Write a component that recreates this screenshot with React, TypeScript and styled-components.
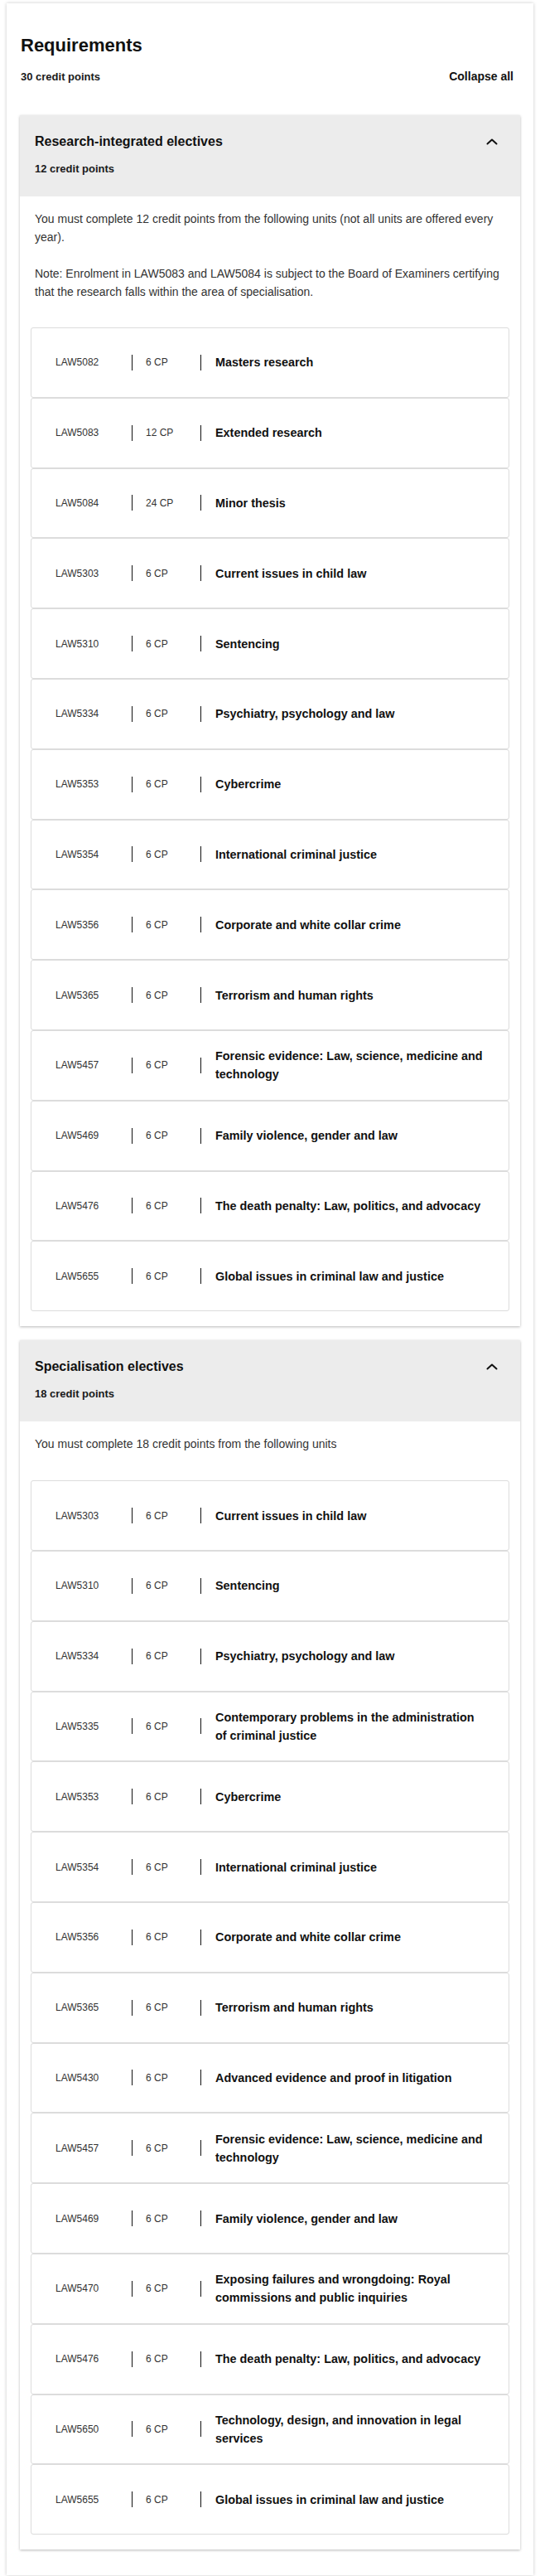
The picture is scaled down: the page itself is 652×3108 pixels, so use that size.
import styled, { createGlobalStyle } from "styled-components";

const GlobalStyle = createGlobalStyle`
  html, body {
    margin: 0;
    padding: 0;
    background: #fff;
  }
  body {
    font-family: "Liberation Sans", Arial, sans-serif;
    color: #111;
  }
  * {
    box-sizing: border-box;
  }
`;

type Unit = { code: string; cp: number; title: string };

const researchUnits: Unit[] = [
  { code: "LAW5082", cp: 6, title: "Masters research" },
  { code: "LAW5083", cp: 12, title: "Extended research" },
  { code: "LAW5084", cp: 24, title: "Minor thesis" },
  { code: "LAW5303", cp: 6, title: "Current issues in child law" },
  { code: "LAW5310", cp: 6, title: "Sentencing" },
  { code: "LAW5334", cp: 6, title: "Psychiatry, psychology and law" },
  { code: "LAW5353", cp: 6, title: "Cybercrime" },
  { code: "LAW5354", cp: 6, title: "International criminal justice" },
  { code: "LAW5356", cp: 6, title: "Corporate and white collar crime" },
  { code: "LAW5365", cp: 6, title: "Terrorism and human rights" },
  { code: "LAW5457", cp: 6, title: "Forensic evidence: Law, science, medicine and technology" },
  { code: "LAW5469", cp: 6, title: "Family violence, gender and law" },
  { code: "LAW5476", cp: 6, title: "The death penalty: Law, politics, and advocacy" },
  { code: "LAW5655", cp: 6, title: "Global issues in criminal law and justice" },
];

const specialisationUnits: Unit[] = [
  { code: "LAW5303", cp: 6, title: "Current issues in child law" },
  { code: "LAW5310", cp: 6, title: "Sentencing" },
  { code: "LAW5334", cp: 6, title: "Psychiatry, psychology and law" },
  { code: "LAW5335", cp: 6, title: "Contemporary problems in the administration of criminal justice" },
  { code: "LAW5353", cp: 6, title: "Cybercrime" },
  { code: "LAW5354", cp: 6, title: "International criminal justice" },
  { code: "LAW5356", cp: 6, title: "Corporate and white collar crime" },
  { code: "LAW5365", cp: 6, title: "Terrorism and human rights" },
  { code: "LAW5430", cp: 6, title: "Advanced evidence and proof in litigation" },
  { code: "LAW5457", cp: 6, title: "Forensic evidence: Law, science, medicine and technology" },
  { code: "LAW5469", cp: 6, title: "Family violence, gender and law" },
  { code: "LAW5470", cp: 6, title: "Exposing failures and wrongdoing: Royal commissions and public inquiries" },
  { code: "LAW5476", cp: 6, title: "The death penalty: Law, politics, and advocacy" },
  { code: "LAW5650", cp: 6, title: "Technology, design, and innovation in legal services" },
  { code: "LAW5655", cp: 6, title: "Global issues in criminal law and justice" },
];

const Page = styled.main`
  padding: 4px 8px 3px 8px;
`;

const Card = styled.section`
  background: #fff;
  box-shadow: 0 0 4px rgba(0, 0, 0, 0.22);
  padding: 38px 16px 31px;
`;

const Top = styled.header`
  padding: 0 8px 0 1px;
  margin-bottom: 37px;
`;

const Heading = styled.h1`
  margin: 0 0 14px;
  font-size: 22px;
  line-height: 26px;
  font-weight: 700;
  color: #111;
`;

const TopRow = styled.div`
  display: flex;
  justify-content: space-between;
  align-items: center;
  height: 20px;
`;

const Credits = styled.span`
  font-size: 13px;
  font-weight: 700;
  color: #1a1a1a;
`;

const CollapseAll = styled.button`
  border: 0;
  background: none;
  padding: 0;
  font-family: inherit;
  font-size: 14px;
  font-weight: 700;
  color: #111;
  cursor: pointer;
`;

const Section = styled.section`
  background: #fff;
  box-shadow: 0 1px 3px rgba(0, 0, 0, 0.28);
  & + & {
    margin-top: 17px;
  }
`;

const SectionHead = styled.div`
  background: #ececec;
  padding: 20px 27px 22px 18px;
`;

const HeadRow = styled.div`
  display: flex;
  justify-content: space-between;
  align-items: center;
  margin-bottom: 10px;
`;

const SectionTitle = styled.h2`
  margin: 0;
  font-size: 16px;
  line-height: 24px;
  font-weight: 700;
  color: #111;
`;

const HeadCredits = styled.div`
  font-size: 13px;
  line-height: 22px;
  font-weight: 700;
  color: #1a1a1a;
`;

const SectionBody = styled.div`
  padding: 16px 13px 18px;
`;

const Para = styled.p`
  margin: 0 0 22px;
  padding-left: 5px;
  font-size: 14px;
  line-height: 22px;
  color: #333;
  &:last-of-type {
    margin-bottom: 0;
  }
`;

const UnitList = styled.ul<{ $gap: number }>`
  list-style: none;
  margin: ${(p) => p.$gap}px 0 0;
  padding: 0;
`;

const UnitRow = styled.li`
  display: flex;
  align-items: center;
  height: 84.8px;
  border: 1px solid #dcdcdc;
  border-radius: 3px;
  padding: 0 30px 0 29px;
`;

const Code = styled.span`
  width: 92px;
  flex-shrink: 0;
  font-size: 12px;
  line-height: 22px;
  color: #333;
`;

const Divider = styled.span`
  width: 1px;
  height: 19px;
  background: #111;
  flex-shrink: 0;
`;

const Points = styled.span`
  width: 82px;
  flex-shrink: 0;
  padding-left: 16px;
  font-size: 12px;
  line-height: 22px;
  color: #333;
`;

const UnitTitle = styled.span`
  flex: 1;
  padding-left: 17px;
  font-size: 14.4px;
  line-height: 22px;
  font-weight: 700;
  color: #111;
`;

const Chevron = () => (
  <svg width="14" height="14" viewBox="0 0 14 14" aria-hidden="true">
    <polyline
      points="1.5,9.5 7,4.5 12.5,9.5"
      fill="none"
      stroke="#111"
      strokeWidth="2"
      strokeLinecap="round"
      strokeLinejoin="round"
    />
  </svg>
);

function UnitItem({ unit }: { unit: Unit }) {
  return (
    <UnitRow>
      <Code>{unit.code}</Code>
      <Divider />
      <Points>{unit.cp} CP</Points>
      <Divider />
      <UnitTitle>{unit.title}</UnitTitle>
    </UnitRow>
  );
}

function Group({
  title,
  credits,
  notes,
  units,
  gap,
}: {
  title: string;
  credits: number;
  notes: string[];
  units: Unit[];
  gap: number;
}) {
  return (
    <Section>
      <SectionHead>
        <HeadRow>
          <SectionTitle>{title}</SectionTitle>
          <Chevron />
        </HeadRow>
        <HeadCredits>{credits} credit points</HeadCredits>
      </SectionHead>
      <SectionBody>
        {notes.map((n) => (
          <Para key={n}>{n}</Para>
        ))}
        <UnitList $gap={gap}>
          {units.map((u) => (
            <UnitItem key={u.code} unit={u} />
          ))}
        </UnitList>
      </SectionBody>
    </Section>
  );
}

function App() {
  return (
    <Page>
      <GlobalStyle />
      <Card>
        <Top>
          <Heading>Requirements</Heading>
          <TopRow>
            <Credits>30 credit points</Credits>
            <CollapseAll>Collapse all</CollapseAll>
          </TopRow>
        </Top>
        <Group
          title="Research-integrated electives"
          credits={12}
          gap={32}
          notes={[
            "You must complete 12 credit points from the following units (not all units are offered every year).",
            "Note: Enrolment in LAW5083 and LAW5084 is subject to the Board of Examiners certifying that the research falls within the area of specialisation.",
          ]}
          units={researchUnits}
        />
        <Group
          title="Specialisation electives"
          credits={18}
          gap={33}
          notes={["You must complete 18 credit points from the following units"]}
          units={specialisationUnits}
        />
      </Card>
    </Page>
  );
}

export default App;
